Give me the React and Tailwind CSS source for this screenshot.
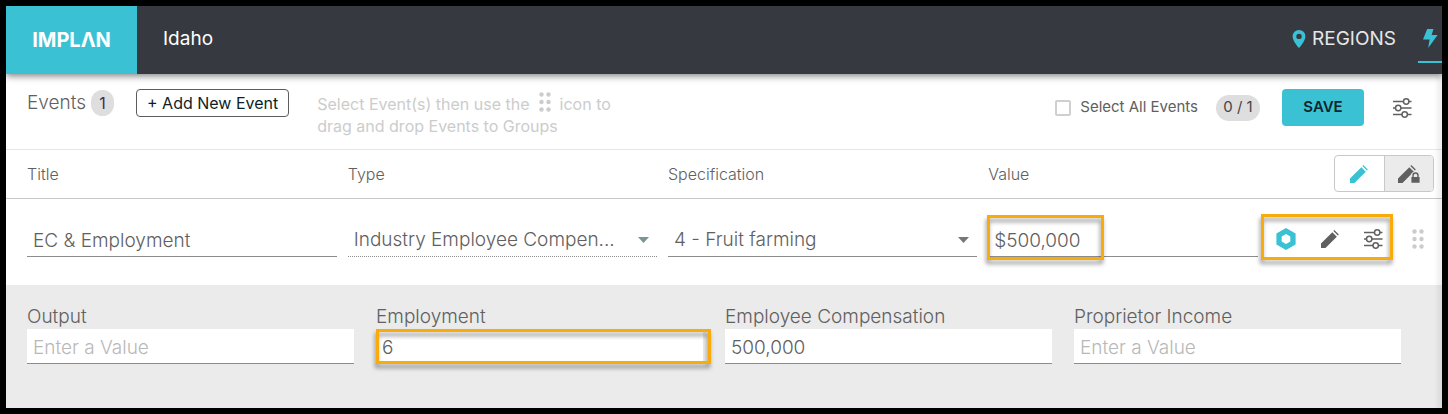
import React from 'react';

const fields = [
  { id: 'output', label: 'Output', value: '' },
  { id: 'employment', label: 'Employment', value: '6', highlighted: true },
  { id: 'compensation', label: 'Employee Compensation', value: '500,000' },
  { id: 'proprietor', label: 'Proprietor Income', value: '' },
];

function PinIcon() {
  return (
    <svg width="14" height="18" viewBox="0 0 14 18" fill="currentColor" fillRule="evenodd" aria-hidden="true">
      <path d="M7 0a6.4 6.4 0 0 0-6.4 6.4C.6 11 7 18 7 18s6.4-7 6.4-11.6A6.4 6.4 0 0 0 7 0Zm0 3.7a2.7 2.7 0 1 1 0 5.4 2.7 2.7 0 0 1 0-5.4Z" />
    </svg>
  );
}

function BoltIcon() {
  return (
    <svg width="15" height="19" viewBox="0 0 15 19" fill="currentColor" aria-hidden="true">
      <path d="M4.2 0H10.5L8.6 6H14.6L5.2 19 6.6 10.5H0Z" />
    </svg>
  );
}

function SlidersIcon() {
  return (
    <svg width="19" height="20" viewBox="0 0 19 20" fill="none" stroke="currentColor" strokeWidth="1.5" aria-hidden="true">
      <path d="M0 3.5H10.5M16 3.5H18.5M0 10H2.5M8 10H18.5M0 16.5H9M14.5 16.5H18.5" />
      <circle cx="13.2" cy="3.5" r="2.7" />
      <circle cx="5.2" cy="10" r="2.7" />
      <circle cx="11.7" cy="16.5" r="2.7" />
    </svg>
  );
}

function PencilIcon() {
  return (
    <svg width="18" height="18" viewBox="0 0 18 18" fill="currentColor" aria-hidden="true">
      <path d="M0 18V13.4L11.3 2.2 15.8 6.7 4.5 18Z" />
      <path d="M12.4 .9 13.3 0 17.8 4.5 16.9 5.4Z" />
    </svg>
  );
}

function PencilLockIcon() {
  return (
    <svg width="22" height="18" viewBox="0 0 22 18" aria-hidden="true">
      <g fill="currentColor">
        <path d="M0 18V13.4L11.3 2.2 15.8 6.7 4.5 18Z" />
        <path d="M12.4 .9 13.3 0 17.8 4.5 16.9 5.4Z" />
      </g>
      <path d="M12 18V11.5L14 7.5H21V18Z" fill="#ebebeb" />
      <path d="M13.4 12H21.6V17.8H13.4Z" fill="currentColor" />
      <path d="M15 12V10.5a2.5 2.5 0 0 1 5 0V12" fill="none" stroke="currentColor" strokeWidth="1.4" />
    </svg>
  );
}

function HexagonIcon() {
  return (
    <svg width="20" height="22" viewBox="0 0 20 22" fill="currentColor" fillRule="evenodd" aria-hidden="true">
      <path d="M10 0 19.6 5.5V16.5L10 22 .4 16.5V5.5ZM10 6 5.7 8.5V13.5L10 16 14.3 13.5V8.5Z" />
    </svg>
  );
}

function DotsIcon() {
  return (
    <svg width="12" height="20" viewBox="0 0 12 20" fill="currentColor" aria-hidden="true">
      <circle cx="2.5" cy="2.5" r="2.2" />
      <circle cx="9.5" cy="2.5" r="2.2" />
      <circle cx="2.5" cy="10" r="2.2" />
      <circle cx="9.5" cy="10" r="2.2" />
      <circle cx="2.5" cy="17.5" r="2.2" />
      <circle cx="9.5" cy="17.5" r="2.2" />
    </svg>
  );
}

function Highlight({ className }) {
  return (
    <span
      className={`absolute pointer-events-none border-3 border-[#f9ab0b] drop-shadow-[-1px_4px_2px_rgba(0,0,0,0.4)] ${className}`}
    />
  );
}

function Dropdown({ label, value, className, caretClass }) {
  return (
    <div className="relative">
      <select
        aria-label={label}
        defaultValue={value}
        className={`appearance-none w-full h-[35px] pt-1 pl-[6px] pr-8 border-b border-[#8c8c8c] bg-white truncate ${className}`}
      >
        <option>{value}</option>
      </select>
      <svg
        className={`absolute right-2 top-[15px] pointer-events-none ${caretClass}`}
        width="11"
        height="6"
        viewBox="0 0 11 6"
        fill="currentColor"
        aria-hidden="true"
      >
        <path d="M0 0H11L5.5 6Z" />
      </svg>
    </div>
  );
}

function Header() {
  return (
    <header className="relative z-10 flex h-[68px] bg-[#363940] text-[19px] text-white shadow-[0_2px_7px_rgba(0,0,0,0.5)]">
      <a href="#home" className="flex w-[131px] shrink-0 items-center justify-center bg-[#3ac2d4] text-[20px] font-bold">
        IMPLΛN
      </a>
      <div className="flex flex-1 items-center pb-0.5 pl-[26px]">Idaho</div>
      <nav className="flex text-[#e6e6e6]">
        <a href="#regions" className="flex items-center gap-[6px] pr-[22px] pb-0.5">
          <span className="text-[#3ac2d4]"><PinIcon /></span>
          REGIONS
        </a>
        <a
          href="#impacts"
          aria-label="Impacts"
          className="flex h-[57px] w-6 items-start justify-center border-b-2 border-[#3ac2d4] pt-[23px] text-[#3ac2d4]"
        >
          <BoltIcon />
        </a>
      </nav>
    </header>
  );
}

function Toolbar() {
  return (
    <div className="flex items-start border-b border-[#e6e6e6] pt-[15px] pr-[30px] pb-3 pl-[21px]">
      <div className="flex h-7 items-center">
        <h1 className="text-[19px] font-light">Events</h1>
        <span className="ml-[5px] flex h-[26px] w-[23px] items-center justify-center rounded-full bg-[#dedede] text-[16px] text-[#4a2a50]">
          1
        </span>
        <button className="ml-[22px] h-7 rounded border border-[#5c5c5c] px-[10px] text-[16px] text-[#0c1f26]">
          + Add New Event
        </button>
      </div>
      <p className="mt-1 ml-7 text-[16px] leading-[22px] text-[#cccccc]">
        <span className="flex items-center">
          Select Event(s) then use the
          <span className="mx-[9px] -mt-3 -mb-2"><DotsIcon /></span>
          icon to
        </span>
        drag and drop Events to Groups
      </p>
      <div className="ml-auto flex items-center">
        <label className="flex items-center gap-[9px] text-[15px]">
          <input type="checkbox" className="size-4 appearance-none rounded-[2px] border-2 border-[#cfcfcf]" />
          Select All Events
        </label>
        <span className="ml-[18px] flex h-[26px] w-11 items-center justify-center rounded-full bg-[#dedede] text-[15px] text-[#444444]">
          0 / 1
        </span>
        <button className="ml-[22px] h-[37px] w-[82px] rounded bg-[#3ac2d4] text-[15px] font-semibold text-[#10262c]">
          SAVE
        </button>
        <button aria-label="Event settings" className="ml-[29px]"><SlidersIcon /></button>
      </div>
    </div>
  );
}

function EventsTable() {
  return (
    <table className="w-full table-fixed">
      <colgroup>
        <col className="w-[23.8%]" />
        <col className="w-[22.3%]" />
        <col className="w-[22.3%]" />
        <col />
        <col className="w-[184px]" />
      </colgroup>
      <thead>
        <tr className="h-12 border-b border-[#c8c8c8] text-left text-[16px]">
          <th className="pl-[21px] font-light">Title</th>
          <th className="font-light">Type</th>
          <th className="font-light">Specification</th>
          <th className="font-light">Value</th>
          <th className="pr-2 font-light">
            <div className="ml-auto flex h-[37px] w-[100px] overflow-hidden rounded border border-[#c8c8c8]">
              <button aria-label="Edit" className="flex flex-1 items-center justify-center text-[#3ac2d4]">
                <PencilIcon />
              </button>
              <button
                aria-label="Lock editing"
                className="flex flex-1 items-center justify-center border-l border-[#c8c8c8] bg-[#ebebeb]"
              >
                <PencilLockIcon />
              </button>
            </div>
          </th>
        </tr>
      </thead>
      <tbody>
        <tr className="align-top text-[19px] font-light">
          <td className="pt-[23px] pr-[11px] pb-7 pl-[21px]">
            <input
              aria-label="Title"
              defaultValue="EC & Employment"
              className="block h-[35px] w-full border-b border-[#8c8c8c] pt-[3px] pl-[6px]"
            />
          </td>
          <td className="pt-[23px] pr-[11px]">
            <Dropdown
              label="Type"
              value="Industry Employee Compen..."
              className="border-dotted"
              caretClass="text-[#7b9496]"
            />
          </td>
          <td className="pt-[23px] pr-[11px]">
            <Dropdown label="Specification" value="4 - Fruit farming" className="border-solid" caretClass="text-[#777777]" />
          </td>
          <td className="pt-[23px]">
            <div className="relative">
              <input
                aria-label="Value"
                defaultValue="$500,000"
                className="block h-[35px] w-full border-b border-[#8c8c8c] pt-[3px] pl-[6px]"
              />
              <Highlight className="-top-[7px] -left-px h-[45px] w-[117px]" />
            </div>
          </td>
          <td className="pt-[23px] pl-[3px]">
            <div className="flex items-center">
              <div className="relative flex h-[35px] items-center gap-[25px] pr-[10px] pl-[15px]">
                <button aria-label="Details" className="text-[#3ac2d4]"><HexagonIcon /></button>
                <button aria-label="Edit event"><PencilIcon /></button>
                <button aria-label="Event options"><SlidersIcon /></button>
                <Highlight className="inset-x-0 -top-2 h-[46px]" />
              </div>
              <button aria-label="Drag event" className="ml-[19px] text-[#cccccc]"><DotsIcon /></button>
            </div>
          </td>
        </tr>
      </tbody>
    </table>
  );
}

function ValuesPanel() {
  return (
    <section className="grid flex-1 grid-cols-4 content-start gap-x-[22px] bg-[#ebebeb] pt-5 pr-[41px] pb-11 pl-[21px] text-[19px] font-light">
      {fields.map((field) => (
        <div key={field.id}>
          <label htmlFor={field.id} className="block leading-6">{field.label}</label>
          <div className="relative">
            <input
              id={field.id}
              defaultValue={field.value}
              placeholder="Enter a Value"
              className="block h-[35px] w-full border-b border-[#8c8c8c] bg-white pt-[3px] pl-[6px] placeholder:text-[#b8b8b8]"
            />
            {field.highlighted && <Highlight className="inset-y-0 left-0 -right-2" />}
          </div>
        </div>
      ))}
    </section>
  );
}

export default function App() {
  return (
    <div className="flex min-h-screen flex-col overflow-hidden border-6 border-black bg-white font-['Inter','Liberation_Sans',sans-serif] text-[#606060]">
      <Header />
      <main className="relative flex flex-1 flex-col">
        <Toolbar />
        <EventsTable />
        <ValuesPanel />
        <div className="pointer-events-none absolute inset-y-0 right-0 w-2 bg-linear-to-l from-black/8 to-transparent" />
      </main>
    </div>
  );
}
